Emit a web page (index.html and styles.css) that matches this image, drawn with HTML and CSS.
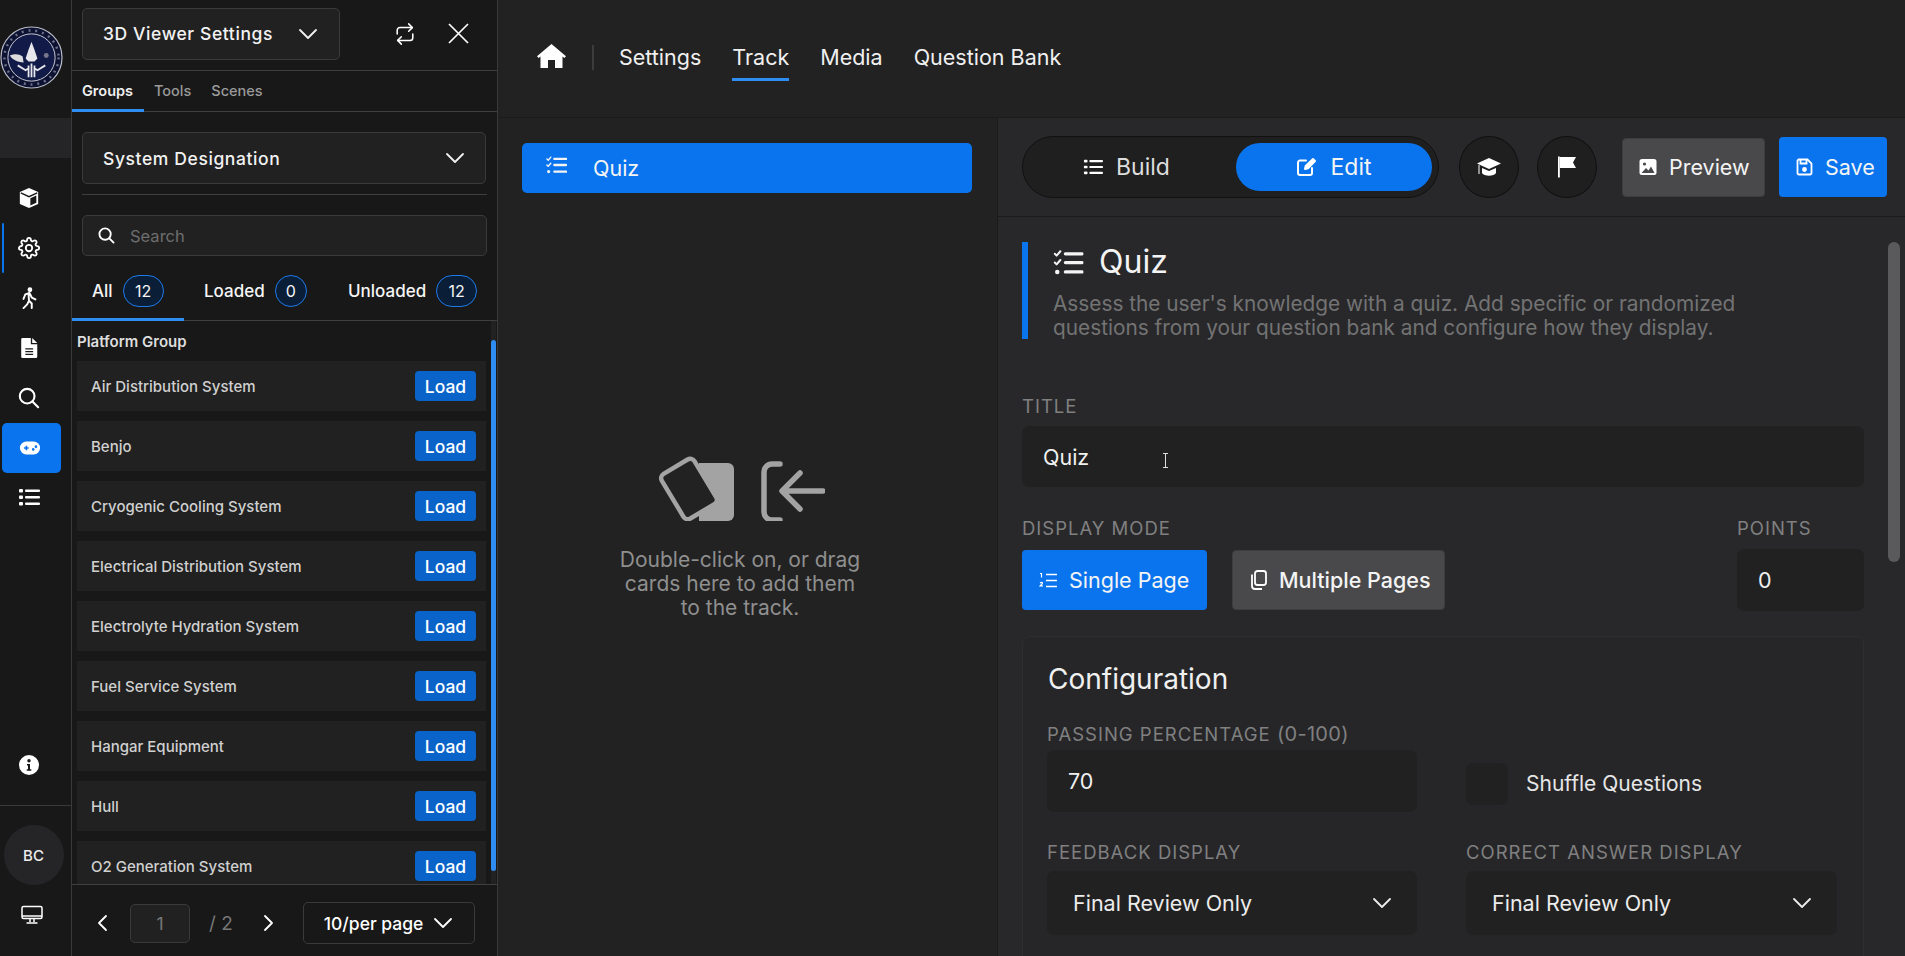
FILE: index.html
```html
<!DOCTYPE html>
<html lang="en">
<head>
    <meta charset="UTF-8">
    <meta name="viewport" content="width=device-width, initial-scale=1.0">
    <title>Quiz - Track Editor</title>
    <link rel="stylesheet" href="styles.css">
</head>
<body>
    <svg class="defs" width="0" height="0">
        <symbol id="chev" viewBox="0 0 20 12"><path d="M2 2l8 8 8-8" fill="none" stroke="currentColor" stroke-width="1.8" stroke-linecap="round" stroke-linejoin="round"/></symbol>
        <symbol id="tasks" viewBox="0 0 24 20"><g fill="none" stroke="currentColor" stroke-linecap="round" stroke-linejoin="round"><path d="M1 3l1.5 1.5L5.5 1M1 10l1.5 1.5L5.5 8" stroke-width="1.6"/><path d="M9.5 3H23M9.5 10H23M9.5 17.5H23" stroke-width="2.6"/></g><circle cx="3" cy="17.5" r="1.8" fill="currentColor"/></symbol>
    </svg>

    <nav class="rail">
        <div class="rail-logo">
            <svg width="63" height="63" viewBox="0 0 64 64">
                <circle cx="32" cy="32" r="31" fill="#0d1233" stroke="#b9bcc6" stroke-width="1.2"/>
                <circle cx="32" cy="32" r="24" fill="#121a48" stroke="#c9ccd4" stroke-width="1"/>
                <circle cx="32" cy="32" r="27.5" fill="none" stroke="#6d7288" stroke-width="2.5" stroke-dasharray="2 5"/>
                <path d="M32 16l3 8 3 9-3 3h-6l-3-3 3-9z" fill="#e8e8ec"/>
                <path d="M10 30c5-2 9-2 13 1l1 6c-5 0-11-2-14-7z" fill="#dcdcdc"/>
                <path d="M18 40l8 5 3-2M46 40l-8 5-3-2M29 40v12M35 40v12M32 38v14" fill="none" stroke="#e8e8ec" stroke-width="1.8"/>
                <circle cx="47" cy="30" r="2.5" fill="#77788a"/>
            </svg>
        </div>
        <div class="rail-band"></div>
        <a class="rail-item">
            <svg width="22" height="22" viewBox="0 0 24 24"><path d="M12 1L2 5.5v13L12 23l10-4.5v-13z" fill="#fff"/><path d="M13.5 12.3l6.5-3v8l-6.5 3z" fill="#181818"/><path d="M3 6.5l9 4 9-4" fill="none" stroke="#181818" stroke-width="1.5"/></svg>
        </a>
        <a class="rail-item rail-item-marked">
            <svg width="22" height="22" viewBox="0 0 24 24" fill="none" stroke="#fff" stroke-width="2"><circle cx="12" cy="12" r="3.5"/><path d="M19.4 15a1.65 1.65 0 0 0 .33 1.82l.06.06a2 2 0 0 1 0 2.83 2 2 0 0 1-2.83 0l-.06-.06a1.65 1.65 0 0 0-1.82-.33 1.65 1.65 0 0 0-1 1.51V21a2 2 0 0 1-2 2 2 2 0 0 1-2-2v-.09A1.65 1.65 0 0 0 9 19.4a1.65 1.65 0 0 0-1.82.33l-.06.06a2 2 0 0 1-2.83 0 2 2 0 0 1 0-2.83l.06-.06a1.65 1.65 0 0 0 .33-1.82 1.65 1.65 0 0 0-1.51-1H3a2 2 0 0 1-2-2 2 2 0 0 1 2-2h.09A1.65 1.65 0 0 0 4.6 9a1.65 1.65 0 0 0-.33-1.82l-.06-.06a2 2 0 0 1 0-2.83 2 2 0 0 1 2.83 0l.06.06a1.65 1.65 0 0 0 1.82.33H9a1.65 1.65 0 0 0 1-1.51V3a2 2 0 0 1 2-2 2 2 0 0 1 2 2v.09a1.65 1.65 0 0 0 1 1.51 1.65 1.65 0 0 0 1.82-.33l.06-.06a2 2 0 0 1 2.83 0 2 2 0 0 1 0 2.83l-.06.06a1.65 1.65 0 0 0-.33 1.82V9a1.65 1.65 0 0 0 1.51 1H21a2 2 0 0 1 2 2 2 2 0 0 1-2 2h-.09a1.65 1.65 0 0 0-1.51 1z"/></svg>
        </a>
        <a class="rail-item">
            <svg width="22" height="22" viewBox="0 0 24 24"><circle cx="13" cy="3" r="2.6" fill="#fff"/><path d="M6 13l2-5 4.500-1.500 2.500 5 4 2M11.500 8l.5 7 3 3v5M12 15l-2 4-4 4" fill="none" stroke="#fff" stroke-width="2.100" stroke-linecap="round" stroke-linejoin="round"/></svg>
        </a>
        <a class="rail-item">
            <svg width="22" height="22" viewBox="0 0 24 24"><path d="M5 1h9v6a1 1 0 0 0 1 1h6v13.5a1.5 1.5 0 0 1-1.500 1.500H5a1.500 1.500 0 0 1-1.500-1.500v-19A1.500 1.500 0 0 1 5 1z" fill="#fff"/><path d="M15.500 1l5.500 5.500h-5.500z" fill="#fff"/><path d="M8 13h8.500M8 16h8.500M8 19h8.500" stroke="#181818" stroke-width="1.500"/></svg>
        </a>
        <a class="rail-item">
            <svg width="22" height="22" viewBox="0 0 24 24" fill="none" stroke="#fff" stroke-width="2.300" stroke-linecap="round"><circle cx="10" cy="10" r="8"/><path d="M16 16l6 6"/></svg>
        </a>
        <a class="rail-item rail-item-active">
            <svg width="22" height="16" viewBox="0 0 24 16"><rect x="1" y="1" width="22" height="14" rx="7" fill="#fff"/><path d="M5.500 8h5M8 5.500v5" stroke="#0a74ee" stroke-width="1.800"/><circle cx="15.500" cy="9.500" r="1.400" fill="#0a74ee"/><circle cx="18.500" cy="6.500" r="1.400" fill="#0a74ee"/></svg>
        </a>
        <a class="rail-item rail-item-list">
            <svg width="22" height="18" viewBox="0 0 22 18"><g fill="#fff"><rect x="1" y="1" width="4" height="3.400" rx="1"/><rect x="1" y="7.500" width="4" height="3.400" rx="1"/><rect x="1" y="14" width="4" height="3.400" rx="1"/><rect x="7" y="1.500" width="15" height="2.600" rx="1"/><rect x="7" y="8" width="15" height="2.600" rx="1"/><rect x="7" y="14.500" width="15" height="2.600" rx="1"/></g></svg>
        </a>
        <a class="rail-item rail-info">
            <svg width="22" height="22" viewBox="0 0 22 22"><circle cx="11" cy="11" r="10" fill="#fff"/><circle cx="11" cy="6.800" r="1.700" fill="#181818"/><path d="M9 10h3v5.300h1.300v1.500H8.700v-1.500H10v-3.800H9z" fill="#181818"/></svg>
        </a>
        <div class="rail-foot">
            <div class="avatar">BC</div>
            <svg width="22" height="20" viewBox="0 0 22 20" fill="none" stroke="#fff" stroke-width="1.500"><rect x="1" y="1.500" width="20" height="12" rx="1.500"/><path d="M1 11h20"/><path d="M9 14v3M13 14v3M5.500 18h11"/></svg>
        </div>
    </nav>

    <aside class="panel">
        <div class="panel-head">
            <div class="dropdown dropdown-head"><span>3D Viewer Settings</span><svg class="chev" width="20" height="12"><use href="#chev"/></svg></div>
            <svg class="repeat" width="22" height="24" viewBox="0 0 24 24" fill="none" stroke="#fff" stroke-width="1.700" stroke-linecap="round" stroke-linejoin="round"><path d="M16 1l4 4-4 4"/><path d="M3.500 12V8a3 3 0 0 1 3-3H20"/><path d="M8 23l-4-4 4-4"/><path d="M20.500 12v4a3 3 0 0 1-3 3H4"/></svg>
            <svg class="close" width="21" height="21" viewBox="0 0 21 21" fill="none" stroke="#fff" stroke-width="1.700"><path d="M1 1l19 19M20 1L1 20"/></svg>
        </div>
        <div class="panel-tabs">
            <a class="panel-tab panel-tab-active">Groups</a>
            <a class="panel-tab">Tools</a>
            <a class="panel-tab">Scenes</a>
        </div>
        <div class="panel-filter">
            <div class="dropdown dropdown-group"><span>System Designation</span><svg class="chev" width="20" height="12"><use href="#chev"/></svg></div>
            <div class="filter-sep"></div>
            <div class="search">
                <svg width="17" height="17" viewBox="0 0 24 24" fill="none" stroke="#fff" stroke-width="2.600" stroke-linecap="round"><circle cx="10" cy="10" r="8"/><path d="M16 16l6 6"/></svg>
                <span>Search</span>
            </div>
        </div>
        <div class="status-tabs">
            <a class="status-tab status-tab-active">All <span class="count">12</span></a>
            <a class="status-tab">Loaded <span class="count count-round">0</span></a>
            <a class="status-tab">Unloaded <span class="count">12</span></a>
        </div>
        <div class="group-area">
            <div class="group-list">
                <h3 class="group-title">Platform Group</h3>
                <div class="group-row"><span>Air Distribution System</span><button class="load">Load</button></div>
                <div class="group-row"><span>Benjo</span><button class="load">Load</button></div>
                <div class="group-row"><span>Cryogenic Cooling System</span><button class="load">Load</button></div>
                <div class="group-row"><span>Electrical Distribution System</span><button class="load">Load</button></div>
                <div class="group-row"><span>Electrolyte Hydration System</span><button class="load">Load</button></div>
                <div class="group-row"><span>Fuel Service System</span><button class="load">Load</button></div>
                <div class="group-row"><span>Hangar Equipment</span><button class="load">Load</button></div>
                <div class="group-row"><span>Hull</span><button class="load">Load</button></div>
                <div class="group-row"><span>O2 Generation System</span><button class="load">Load</button></div>
            </div>
            <div class="scroll-track"><div class="scroll-thumb"></div></div>
        </div>
        <div class="pager">
            <svg class="pager-arrow" width="12" height="18" viewBox="0 0 12 18" fill="none" stroke="#fff" stroke-width="1.800" stroke-linecap="round" stroke-linejoin="round"><path d="M10 2L3 9l7 7"/></svg>
            <div class="pager-input">1</div>
            <span class="pager-total">/ 2</span>
            <svg class="pager-arrow pager-next" width="12" height="18" viewBox="0 0 12 18" fill="none" stroke="#fff" stroke-width="1.800" stroke-linecap="round" stroke-linejoin="round"><path d="M2 2l7 7-7 7"/></svg>
            <div class="per-page">10/per page <svg width="20" height="12"><use href="#chev"/></svg></div>
        </div>
    </aside>

    <main class="main">
        <header class="topbar">
            <svg class="home" width="29" height="26" viewBox="0 0 29 26"><path d="M14.500 1L29 13.300 27.300 15l-1.800-1.400V25H18v-8h-7v8H3.500V13.600L1.700 15 0 13.300z" fill="#fff"/></svg>
            <span class="topbar-sep"></span>
            <a class="toplink">Settings</a>
            <a class="toplink toplink-active">Track</a>
            <a class="toplink">Media</a>
            <a class="toplink">Question Bank</a>
        </header>
        <div class="workspace">
            <section class="track">
                <div class="track-card">
                    <svg width="21" height="18"><use href="#tasks"/></svg>
                    <span>Quiz</span>
                </div>
                <div class="track-empty">
                    <svg width="168" height="66" viewBox="0 0 168 66" fill="none">
                        <path d="M42 8h29a6 6 0 0 1 6 6v46a6 6 0 0 1-6 6H42z" fill="#a3a3a3"/>
                        <rect x="13" y="8" width="38" height="52" rx="5" transform="rotate(-31 32 34)" fill="#222" stroke="#a3a3a3" stroke-width="4.500"/>
                        <path d="M123 9h-8a8 8 0 0 0-8 8v40a8 8 0 0 0 8 8h8" stroke="#a3a3a3" stroke-width="5.500" stroke-linecap="round"/>
                        <path d="M166 36h-35M143 18l-18 18 18 18" stroke="#a3a3a3" stroke-width="5.500" stroke-linecap="round" stroke-linejoin="round"/>
                    </svg>
                    <p>Double-click on, or drag<br>cards here to add them<br>to the track.</p>
                </div>
            </section>
            <section class="editor">
                <div class="toolbar">
                    <div class="mode-switch">
                        <a class="mode mode-build">
                            <svg width="20" height="18" viewBox="0 0 22 18"><g fill="#fff"><rect x="1" y="1" width="4" height="3" rx="1"/><rect x="1" y="7.500" width="4" height="3" rx="1"/><rect x="1" y="14" width="4" height="3" rx="1"/><rect x="7" y="1.300" width="15" height="2.400" rx="1"/><rect x="7" y="7.800" width="15" height="2.400" rx="1"/><rect x="7" y="14.300" width="15" height="2.400" rx="1"/></g></svg>
                            Build
                        </a>
                        <a class="mode mode-edit">
                            <svg width="21" height="20" viewBox="0 0 21 20" fill="none" stroke="#fff" stroke-width="2" stroke-linecap="round" stroke-linejoin="round"><path d="M10 3.500H4a2 2 0 0 0-2 2V16a2 2 0 0 0 2 2h10a2 2 0 0 0 2-2v-5"/><path d="M9 12l.7-3L17 2l2 2-7 7.300z" fill="#fff"/></svg>
                            Edit
                        </a>
                    </div>
                    <a class="round-btn">
                        <svg width="26" height="22" viewBox="0 0 26 22" fill="#fff"><path d="M13 2L1 7.500 13 13l12-5.500z"/><path d="M6 12v5c2 3.500 12 3.500 14 0v-5l-7 3zM2.500 9h1v9h-1z"/></svg>
                    </a>
                    <a class="round-btn round-btn-flag">
                        <svg width="20" height="22" viewBox="0 0 20 22" fill="#fff"><rect x="1" y="0.500" width="1.800" height="21"/><path d="M3 1h16l-3 5.500 3 5.500H3z"/></svg>
                    </a>
                    <a class="btn btn-grey btn-preview">
                        <svg width="18" height="18" viewBox="0 0 18 18"><rect x="0.500" y="1" width="17" height="16" rx="2.500" fill="#fff"/><circle cx="5.500" cy="6" r="1.600" fill="#49494b"/><path d="M2.500 15l4.500-5 2.500 2.500 2.500-4 3.500 6.500z" fill="#49494b"/></svg>
                        Preview
                    </a>
                    <a class="btn btn-blue btn-save">
                        <svg width="17" height="18" viewBox="0 0 17 18" fill="none" stroke="#fff" stroke-width="1.800"><path d="M2.500 1.500h9l4 4V15a1.500 1.500 0 0 1-1.500 1.500H3A1.500 1.500 0 0 1 1.500 15V2.500z"/><path d="M4.500 1.500v4h6v-4"/><circle cx="8.500" cy="11.500" r="1.500" fill="#fff"/></svg>
                        Save
                    </a>
                </div>
                <div class="editor-scroll">
                    <div class="editor-body">
                        <div class="intro">
                            <h2><svg width="31" height="25" viewBox="0 0 24 20"><use href="#tasks"/></svg> Quiz</h2>
                            <p>Assess the user's knowledge with a quiz. Add specific or randomized<br>questions from your question bank and configure how they display.</p>
                        </div>
                        <label class="field-label field-label-title">TITLE</label>
                        <div class="input">Quiz<span class="ibeam"></span></div>
                        <div class="mode-row">
                            <div>
                                <label class="field-label">DISPLAY MODE</label>
                                <div class="mode-btns">
                                    <a class="btn btn-blue btn-single">
                                        <svg width="18" height="17" viewBox="0 0 18 17" fill="none" stroke="#fff"><path d="M1 1.500h1.500v4M1 11c2-1.500 3 0 2 1l-2 2h3" stroke-width="1.200"/><path d="M7 2.500h11M7 8.500h11M7 14.500h11" stroke-width="1.700"/></svg>
                                        Single Page
                                    </a>
                                    <a class="btn btn-grey btn-multi">
                                        <svg width="17" height="20" viewBox="0 0 17 20" fill="none" stroke="#fff" stroke-width="1.800"><rect x="5" y="1" width="11" height="14" rx="2.500"/><path d="M2 4.500V16a3 3 0 0 0 3 3h7"/></svg>
                                        Multiple Pages
                                    </a>
                                </div>
                            </div>
                            <div class="points">
                                <label class="field-label">POINTS</label>
                                <div class="input input-points">0</div>
                            </div>
                        </div>
                        <div class="config">
                            <h3>Configuration</h3>
                            <div class="config-grid">
                                <div>
                                    <label class="field-label">PASSING PERCENTAGE <span class="range">(0-100)</span></label>
                                    <div class="input input-small">70</div>
                                </div>
                                <div class="shuffle"><span class="checkbox"></span>Shuffle Questions</div>
                                <div>
                                    <label class="field-label">FEEDBACK DISPLAY</label>
                                    <div class="select"><span>Final Review Only</span><svg width="20" height="12"><use href="#chev"/></svg></div>
                                </div>
                                <div>
                                    <label class="field-label">CORRECT ANSWER DISPLAY</label>
                                    <div class="select"><span>Final Review Only</span><svg width="20" height="12"><use href="#chev"/></svg></div>
                                </div>
                            </div>
                        </div>
                    </div>
                    <div class="editor-thumb"></div>
                </div>
            </section>
        </div>
    </main>
</body>
</html>
```

FILE: styles.css
```css
* { margin: 0; padding: 0; box-sizing: border-box; }
html, body { height: 100%; overflow: hidden; }
body {
    display: flex;
    font-family: 'Inter', 'Liberation Sans', sans-serif;
    background: #181818;
    color: #fff;
}
.defs { position: absolute; }
a { display: block; }

/* left icon rail */
.rail {
    width: 72px;
    flex-shrink: 0;
    height: 956px;
    display: flex;
    flex-direction: column;
    background: #181818;
    border-right: 1px solid #3a3a3a;
}
.rail-logo { height: 118px; padding-top: 26px; }
.rail-band { height: 40px; background: #252527; margin-bottom: 15px; }
.rail-item {
    height: 50px;
    width: 59px;
    display: flex;
    align-items: center;
    justify-content: center;
    padding-right: 1px;
}
.rail-item-marked { position: relative; }
.rail-item-marked::before {
    content: '';
    position: absolute;
    left: 2px;
    top: 0;
    width: 2px;
    height: 50px;
    background: #0a74ee;
    border-radius: 2px;
}
.rail-item-active {
    margin-left: 2px;
    background: #0a74ee;
    border-radius: 5px;
    padding-right: 3px;
}
.rail-item-list { height: 48px; }
.rail-info { margin-top: auto; margin-bottom: 15px; }
.rail-foot {
    height: 151px;
    border-top: 1px solid #3a3a3a;
    display: flex;
    flex-direction: column;
    align-items: center;
    padding: 19px 7px 0 0;
    gap: 20px;
}
.avatar {
    width: 60px;
    height: 60px;
    border-radius: 50%;
    background: #252527;
    display: flex;
    align-items: center;
    justify-content: center;
    font-size: 15px;
    font-weight: 500;
    color: #eee;
    margin-left: 3px;
}

/* groups panel */
.panel {
    width: 426px;
    flex-shrink: 0;
    height: 956px;
    display: flex;
    flex-direction: column;
    background: #181818;
    border-right: 1px solid #3a3a3a;
}
.panel-head {
    height: 71px;
    display: flex;
    align-items: center;
    padding: 0 0 3px 10px;
    border-bottom: 1px solid #3f3f3f;
}
.dropdown {
    display: flex;
    align-items: center;
    justify-content: space-between;
    background: #212121;
    border: 1px solid #3a3a3a;
    border-radius: 5px;
    font-size: 17.5px;
    font-weight: 500;
    letter-spacing: .6px;
    color: #f2f2f2;
}
.dropdown-head { width: 258px; height: 52px; padding: 0 21px 0 20px; }
.dropdown-group { width: 404px; height: 52px; padding: 0 20px; }
.chev { flex-shrink: 0; }
.repeat { margin-left: 54px; }
.close { margin-left: 32px; }
.panel-tabs {
    height: 41px;
    display: flex;
    border-bottom: 1px solid #3f3f3f;
    font-size: 14.5px;
    font-weight: 500;
}
.panel-tab { padding: 11px 0 0; margin-left: 20px; color: #9a9a9a; }
.panel-tab:first-child {
    width: 72px;
    margin-left: 0;
    margin-right: -10px;
    padding-left: 10px;
    margin-bottom: -1px;
}
.panel-tab-active { color: #eee; border-bottom: 3px solid #2f8cf0; font-weight: 600; }
.panel-filter { padding: 20px 10px 0; }
.filter-sep { margin-top: 10px; border-top: 1px solid #3f3f3f; }
.search {
    height: 41px;
    margin-top: 20px;
    display: flex;
    align-items: center;
    gap: 15px;
    padding-left: 15px;
    background: #212121;
    border: 1px solid #3a3a3a;
    border-radius: 5px;
    font-size: 16.5px;
    color: #6e6e6e;
}
.status-tabs {
    height: 65px;
    display: grid;
    grid-template-columns: 112px 144px 1fr;
    border-bottom: 1px solid #3f3f3f;
    font-size: 17px;
    font-weight: 500;
}
.status-tab {
    display: flex;
    align-items: center;
    gap: 10px;
    padding: 6px 0 0 20px;
    color: #f5f5f5;
}
.status-tab-active { border-bottom: 3px solid #2f8cf0; margin-bottom: -1px; padding-top: 8px; }
.count {
    width: 41px;
    height: 32px;
    display: flex;
    align-items: center;
    justify-content: center;
    background: #0a1e38;
    border: 1px solid #1f7ae6;
    border-radius: 16px;
    font-size: 16px;
    font-weight: 400;
}
.count-round { width: 32px; }
.group-area {
    height: 564px;
    flex-shrink: 0;
    display: flex;
    overflow: hidden;
    border-bottom: 1px solid #3f3f3f;
}
.group-list {
    flex: 1;
    padding: 11px 5px 0;
    overflow: hidden;
    display: flex;
    flex-direction: column;
    gap: 10px;
}
.group-title {
    font-size: 15px;
    font-weight: 600;
    line-height: 19px;
    color: #ddd;
}
.group-row {
    height: 50px;
    flex-shrink: 0;
    display: flex;
    align-items: center;
    justify-content: space-between;
    padding: 0 10px 0 14px;
    background: #212121;
    font-size: 15px;
    font-weight: 500;
    color: #d0d0d0;
}
.load {
    width: 61px;
    height: 30px;
    background: #0a63c9;
    color: #fff;
    border: none;
    border-radius: 4px;
    font-family: inherit;
    font-size: 17.5px;
    font-weight: 500;
}
.scroll-track { width: 5px; margin-right: 1px; background: #222; }
.scroll-thumb {
    width: 5px;
    height: 531px;
    margin-top: 19px;
    background: #2f8cf0;
    border-radius: 3px;
}
.pager {
    flex: 1;
    display: flex;
    align-items: center;
    padding: 5px 0 0 24px;
    font-size: 17.5px;
}
.pager-input {
    width: 60px;
    height: 39px;
    margin-left: 22px;
    display: flex;
    align-items: center;
    justify-content: center;
    background: #212121;
    border: 1px solid #3a3a3a;
    border-radius: 5px;
    color: #777;
}
.pager-total { margin-left: 19px; color: #777; font-size: 19px; }
.pager-next { margin-left: 30px; }
.per-page {
    width: 172px;
    height: 42px;
    margin-left: 28px;
    display: flex;
    align-items: center;
    gap: 10px;
    padding-left: 20px;
    border: 1px solid #3a3a3a;
    border-radius: 5px;
    font-weight: 500;
}

/* main area */
.main { flex: 1; min-width: 0; height: 956px; display: flex; flex-direction: column; background: #222; }
.topbar {
    height: 118px;
    flex-shrink: 0;
    display: flex;
    align-items: center;
    gap: 31px;
    padding: 0 0 3px 39px;
    border-bottom: 1px solid #1b1b1b;
}
.home { margin-top: -2px; }
.topbar-sep { width: 2px; height: 25px; background: #3c3c3c; margin: 0 -6px 0 -5px; }
.toplink { font-size: 21.5px; line-height: 36px; color: #f0f0f0; height: 36px; }
.toplink-active { box-shadow: 0 3px 0 #2f8cf0; height: 39px; margin-top: 3px; }
.workspace { flex: 1; min-height: 0; display: flex; }
.track { width: 499px; flex-shrink: 0; padding: 25px 0 0 24px; }
.track-card {
    width: 450px;
    height: 50px;
    display: flex;
    align-items: center;
    gap: 26px;
    padding-left: 24px;
    background: #0a74ee;
    border-radius: 5px;
    font-size: 21.5px;
    color: #f4f4f4;
}
.track-card svg { margin-top: -6px; }
.track-empty { width: 442px; margin: 262px 0 0 -3px; text-align: center; }
.track-empty svg { display: block; margin-left: 138px; }
.track-empty p { margin-top: 27px; font-size: 21px; line-height: 24px; color: #8f8f8f; }

.editor { flex: 1; min-width: 0; display: flex; flex-direction: column; background: #28282b; border-left: 1px solid #1b1b1b; }
.toolbar {
    height: 99px;
    flex-shrink: 0;
    display: flex;
    align-items: center;
    padding-left: 24px;
    border-bottom: 1px solid #1b1b1b;
    color: #f4f4f4;
}
.mode-switch {
    width: 417px;
    height: 62px;
    display: flex;
    align-items: center;
    justify-content: space-between;
    padding-right: 6px;
    background: #1f1f1f;
    border: 1px solid #111;
    border-radius: 31px;
    font-size: 23px;
}
.mode { display: flex; align-items: center; gap: 13px; }
.mode-build { padding-left: 60px; color: #ddd; }
.mode-edit {
    width: 196px;
    height: 48px;
    justify-content: center;
    background: #0a74ee;
    border-radius: 24px;
}
.round-btn {
    width: 60px;
    height: 62px;
    margin-left: 20px;
    display: flex;
    align-items: center;
    justify-content: center;
    background: #1f1f1f;
    border: 1px solid #111;
    border-radius: 50%;
}
.round-btn-flag { margin-left: 18px; }
.btn {
    display: flex;
    align-items: center;
    gap: 12px;
    font-size: 21.5px;
    border-radius: 4px;
    color: #f4f4f4;
}
.btn-grey { background: #49494b; border: 1px solid #3d3d3f; }
.btn-blue { background: #0a74ee; }
.btn-preview { width: 143px; height: 59px; margin-left: 25px; padding-left: 16px; }
.btn-save { width: 108px; height: 60px; margin-left: 14px; padding-left: 17px; }
.editor-scroll { flex: 1; min-height: 0; display: flex; overflow: hidden; }
.editor-body { width: 866px; flex-shrink: 0; padding: 25px 0 0 24px; }
.intro {
    height: 97px;
    padding-left: 25px;
    border-left: 6px solid #0a74ee;
}
.intro h2 {
    display: flex;
    align-items: center;
    gap: 15px;
    padding-top: 2px;
    font-size: 32px;
    line-height: 36px;
    font-weight: 400;
    color: #f4f4f4;
}
.intro p { margin-top: 12px; font-size: 20.8px; line-height: 24px; color: #737373; }
.field-label { display: block; font-size: 18.5px; line-height: 22px; color: #808080; letter-spacing: 1px; }
.field-label-title { margin-top: 56px; margin-bottom: 9px; }
.input {
    position: relative;
    height: 61px;
    display: flex;
    align-items: center;
    padding-left: 21px;
    background: #212121;
    border-radius: 7px;
    font-size: 21.5px;
    color: #f0f0f0;
}
.ibeam {
    position: absolute;
    left: 143px;
    top: 27px;
    width: 1px;
    height: 15px;
    background: #ddd;
}
.ibeam::before, .ibeam::after {
    content: '';
    position: absolute;
    left: -2px;
    width: 5px;
    height: 1px;
    background: #ddd;
}
.ibeam::before { top: 0; }
.ibeam::after { bottom: 0; }
.mode-row { display: flex; justify-content: space-between; margin-top: 30px; }
.mode-btns { display: flex; gap: 25px; margin-top: 11px; }
.btn-single { width: 185px; height: 60px; padding-left: 17px; }
.btn-multi { width: 213px; height: 60px; padding-left: 17px; font-weight: 500; }
.points { width: 127px; }
.input-points { height: 62px; margin-top: 10px; }
.config {
    height: 330px;
    margin-top: 25px;
    padding: 24px 25px 0;
    border: 1px solid #2e2e31;
    border-radius: 8px;
    background: #262629;
}
.config h3 { font-size: 28px; line-height: 36px; font-weight: 400; color: #f0f0f0; }
.config-grid {
    display: grid;
    grid-template-columns: 370px 371px;
    column-gap: 49px;
    row-gap: 29px;
    margin-top: 26px;
    margin-left: -1px;
}
.range { font-size: 20px; letter-spacing: .3px; }
.input-small { height: 62px; margin-top: 5px; }
.shuffle { display: flex; align-items: center; gap: 18px; padding-top: 32px; font-size: 21px; color: #e6e6e6; }
.checkbox { width: 42px; height: 42px; background: #212121; border-radius: 7px; }
.select {
    height: 64px;
    margin-top: 8px;
    display: flex;
    align-items: center;
    justify-content: space-between;
    padding: 0 25px 0 26px;
    background: #212121;
    border-radius: 7px;
    font-size: 21.5px;
    color: #ececec;
}
.editor-thumb {
    width: 12px;
    height: 320px;
    margin: 25px 0 0 24px;
    background: #5a5a5d;
    border-radius: 6px;
}
```
